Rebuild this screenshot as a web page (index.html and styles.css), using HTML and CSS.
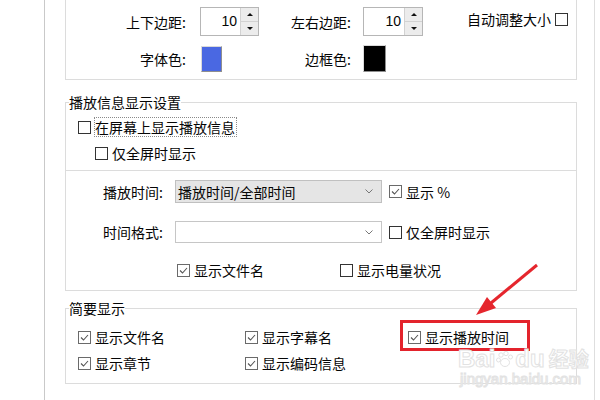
FILE: index.html
```html
<!DOCTYPE html>
<html lang="zh-CN">
<head>
    <meta charset="UTF-8">
    <meta name="viewport" content="width=device-width, initial-scale=1.0">
    <title>播放信息显示设置</title>
    <link rel="stylesheet" href="styles.css">
</head>
<body>
    <div class="panel">
        <!-- 字幕样式 (上半部分被裁掉) -->
        <div class="group group-style">
            <div class="style-grid">
                <span class="field-label">上下边距:</span>
                <div class="spin">
                    <span class="spin-value">10</span>
                    <span class="spin-btns"><span class="spin-btn up"></span><span class="spin-btn down"></span></span>
                </div>
                <span class="field-label narrow">左右边距:</span>
                <div class="spin">
                    <span class="spin-value">10</span>
                    <span class="spin-btns"><span class="spin-btn up"></span><span class="spin-btn down"></span></span>
                </div>
                <label class="auto-size">自动调整大小 <span class="box"></span></label>

                <span class="field-label">字体色:</span>
                <div class="swatch blue"></div>
                <span class="field-label narrow">边框色:</span>
                <div class="swatch black"></div>
            </div>
        </div>

        <fieldset class="group group-info">
            <legend>播放信息显示设置</legend>
            <div class="info-top">
                <label class="check"><span class="box"></span><span class="focus">在屏幕上显示播放信息</span></label>
                <label class="check sub"><span class="box"></span>仅全屏时显示</label>
            </div>
            <div class="info-bottom">
                <div class="combo-row">
                    <span class="combo-label">播放时间:</span>
                    <div class="combo filled">
                        <span>播放时间/全部时间</span>
                        <svg class="chevron" width="8" height="5" viewBox="0 0 8 5"><path d="M0.5 0.5L4 4L7.5 0.5"/></svg>
                    </div>
                    <label class="check"><span class="box on"><svg viewBox="0 0 11 11"><path d="M2 5.5L4.5 8L9 3"/></svg></span>显示 %</label>
                </div>
                <div class="combo-row second">
                    <span class="combo-label">时间格式:</span>
                    <div class="combo">
                        <span></span>
                        <svg class="chevron" width="8" height="5" viewBox="0 0 8 5"><path d="M0.5 0.5L4 4L7.5 0.5"/></svg>
                    </div>
                    <label class="check"><span class="box"></span>仅全屏时显示</label>
                </div>
                <div class="check-row">
                    <label class="check"><span class="box on"><svg viewBox="0 0 11 11"><path d="M2 5.5L4.5 8L9 3"/></svg></span>显示文件名</label>
                    <label class="check"><span class="box"></span>显示电量状况</label>
                </div>
            </div>
        </fieldset>

        <fieldset class="group group-brief">
            <legend>简要显示</legend>
            <div class="brief-grid">
                <label class="check"><span class="box on"><svg viewBox="0 0 11 11"><path d="M2 5.5L4.5 8L9 3"/></svg></span>显示文件名</label>
                <label class="check"><span class="box on"><svg viewBox="0 0 11 11"><path d="M2 5.5L4.5 8L9 3"/></svg></span>显示字幕名</label>
                <label class="check"><span class="box on"><svg viewBox="0 0 11 11"><path d="M2 5.5L4.5 8L9 3"/></svg></span>显示播放时间</label>
                <label class="check"><span class="box on"><svg viewBox="0 0 11 11"><path d="M2 5.5L4.5 8L9 3"/></svg></span>显示章节</label>
                <label class="check"><span class="box on"><svg viewBox="0 0 11 11"><path d="M2 5.5L4.5 8L9 3"/></svg></span>显示编码信息</label>
            </div>
        </fieldset>

        <!-- 标注 -->
        <div class="callout"></div>
        <svg class="arrow" width="75" height="62" viewBox="0 0 75 62">
            <line x1="67" y1="7" x2="21" y2="45"/>
            <polygon points="6,57 26,50 17,39"/>
        </svg>

        <div class="watermark">
            <div class="wm-logo">Bai<svg width="18" height="18" viewBox="0 0 18 18"><circle cx="5" cy="5" r="2.2"/><circle cx="10" cy="3.5" r="2.2"/><circle cx="14.5" cy="7" r="2"/><circle cx="2.5" cy="10" r="2"/><ellipse cx="9" cy="12.5" rx="4.5" ry="4"/></svg>du <span class="wm-cn">经验</span></div>
            <div class="wm-url">jingyan.baidu.com</div>
        </div>
    </div>
</body>
</html>
```

FILE: styles.css
```css
body {
    margin: 0;
    background: #fff;
    font-family: "Noto Sans CJK SC", "Noto Sans", sans-serif;
    font-size: 14px;
    line-height: 20px;
    color: #050505;
}
.panel {
    position: relative;
    box-sizing: border-box;
    width: 551px;
    height: 400px;
    margin-left: 44px;
    padding: 0 17px 0 20px;
    border-left: 1px solid #c9c9c9;
    border-right: 1px solid #dedede;
    overflow: hidden;
}
.group {
    border: 1px solid #dcdcdc;
}

/* 上方样式组 */
.group-style {
    border-top: none;
    padding: 7px 0;
}
.style-grid {
    display: grid;
    grid-template-columns: 134px 59px 104px 60px 1fr;
    grid-template-rows: 29px 27px;
    row-gap: 9px;
    align-items: center;
}
.field-label {
    text-align: right;
    padding-right: 14px;
}
.field-label.narrow {
    padding-right: 12px;
}
.spin {
    display: flex;
    height: 29px;
    box-sizing: border-box;
    border: 1px solid #b6b6b6;
    background: #fff;
}
.spin-value {
    flex: 1;
    text-align: right;
    padding-right: 3px;
    font-family: "Liberation Sans", sans-serif;
    line-height: 26px;
}
.spin-btns {
    width: 17px;
    display: flex;
    flex-direction: column;
    border-left: 1px solid #d2d2d2;
}
.spin-btn {
    flex: 1;
    display: flex;
    align-items: center;
    justify-content: center;
    background: #ececec;
}
.spin-btn + .spin-btn {
    border-top: 1px solid #d2d2d2;
}
.spin-btn::before {
    content: "";
    border-left: 3px solid transparent;
    border-right: 3px solid transparent;
}
.spin-btn.up::before {
    border-bottom: 3px solid #111;
}
.spin-btn.down::before {
    border-top: 3px solid #111;
}
.swatch {
    width: 21px;
    height: 26px;
    box-sizing: border-box;
    margin-left: 1px;
    border: 1px solid;
    border-color: #dadada #8f8f8f #8f8f8f #dadada;
}
.swatch.blue {
    background: #4a68e2;
}
.swatch.black {
    width: 23px;
    height: 27px;
    margin-left: 0;
    background: #000;
}
.auto-size {
    display: flex;
    align-items: center;
    gap: 4px;
    align-self: start;
    margin-top: 2px;
    padding-left: 44px;
    white-space: nowrap;
}

/* 复选框 */
.check {
    display: flex;
    align-items: center;
    gap: 4px;
    white-space: nowrap;
}
.box {
    flex: none;
    width: 13px;
    height: 13px;
    box-sizing: border-box;
    border: 1px solid #333;
    background: #fff;
}
.box.on {
    border-color: #6a6a6a;
}
.box svg {
    display: block;
    width: 11px;
    height: 11px;
    fill: none;
    stroke: #555;
    stroke-width: 1.1;
}

/* 播放信息显示设置 */
fieldset.group {
    margin: 12px 0 0;
    padding: 0;
    min-width: 0;
}
legend {
    margin-left: 3px;
    padding: 0;
    line-height: 20px;
}
.info-top {
    display: flex;
    flex-direction: column;
    align-items: flex-start;
    gap: 6px;
    padding: 5px 0 7px 12px;
}
.info-top .check {
    gap: 3px;
}
.info-top .check.sub {
    margin-left: 17px;
    gap: 4px;
}
.focus {
    border: 1px dotted #8a8a8a;
    padding: 0 1px 0 0;
    line-height: 18px;
}
.info-bottom {
    border-top: 1px solid #dcdcdc;
    padding: 9px 0 10px;
}
.combo-row {
    display: grid;
    grid-template-columns: 109px 207px auto;
    align-items: center;
    height: 23px;
}
.combo-row .check {
    margin-left: 7px;
}
.combo-row.second {
    margin-top: 18px;
    height: 22px;
}
.combo-label {
    text-align: right;
    padding-right: 12px;
}
.combo {
    display: flex;
    align-items: center;
    justify-content: space-between;
    height: 100%;
    box-sizing: border-box;
    padding: 0 8px 0 2px;
    border: 1px solid #c6c6c6;
    background: #fff;
}
.combo.filled {
    background: #e5e5e5;
    border-color: #c0c0c0;
}
.chevron {
    fill: none;
    stroke: #777;
    stroke-width: 1;
}
.check-row {
    display: flex;
    margin-top: 17px;
    padding-left: 111px;
}
.check-row .check:first-child {
    width: 163px;
}

/* 简要显示 */
.group-brief {
    margin-top: 7px !important;
}
.brief-grid {
    display: grid;
    grid-template-columns: 167px 163px auto;
    row-gap: 6px;
    padding: 9px 0 10px 12px;
}

/* 红色标注 */
.callout {
    position: absolute;
    left: 355px;
    top: 320px;
    width: 130px;
    height: 31px;
    box-sizing: border-box;
    border: 3px solid #e3232c;
}
.arrow {
    position: absolute;
    left: 425px;
    top: 258px;
}
.arrow line {
    stroke: #e5262d;
    stroke-width: 3;
}
.arrow polygon {
    fill: #e5262d;
}

/* 水印 */
.watermark {
    position: absolute;
    left: 413px;
    top: 348px;
    width: max-content;
    white-space: nowrap;
    color: #fff;
    -webkit-text-stroke: 1px #e2e2e2;
}
.wm-logo {
    display: flex;
    align-items: center;
    height: 22px;
    font-family: "Liberation Sans", sans-serif;
    font-size: 24px;
    font-weight: bold;
    line-height: 22px;
}
.wm-cn {
    font-family: "Noto Sans CJK SC", sans-serif;
    font-size: 20px;
    line-height: 22px;
    margin-left: 4px;
}
.wm-logo svg {
    fill: none;
    stroke: #e2e2e2;
    margin: 0 1px;
}
.wm-url {
    font-family: "Liberation Sans", sans-serif;
    font-size: 15px;
    line-height: 18px;
    margin-left: 2px;
}
```
